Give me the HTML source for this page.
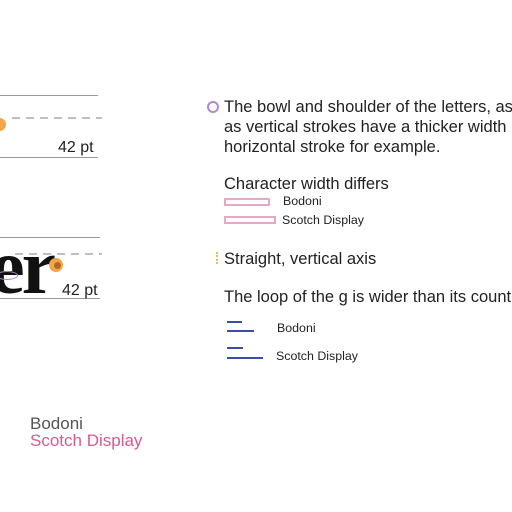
<!DOCTYPE html><html><head><style>
body{margin:0;width:512px;height:512px;overflow:hidden;background:#fff;position:relative;font-family:"Liberation Sans",sans-serif;color:#222}
.a{position:absolute;white-space:nowrap}
.l{position:absolute;height:1px;background:#999}
.d{position:absolute;height:0;border-top:1px dashed #999}
.t{font-size:16.5px;line-height:20px}
.s{font-size:12.4px}
.b{position:absolute;height:2px;background:#3a4fa0}
.r{position:absolute;border:2px solid #e7a8c8;height:4px}
</style></head><body>
<div class="l" style="left:0;top:95px;width:98px"></div>
<svg class="a" style="left:0;top:117px" width="102" height="3"><line x1="12" y1="1" x2="102" y2="1" stroke="#999" stroke-width="1.2" stroke-dasharray="8,6"/></svg>
<div class="l" style="left:0;top:157px;width:98px"></div>
<div class="a" style="left:58px;top:139px;font-size:16px">42 pt</div>
<div class="a" style="left:-7px;top:118px;width:13px;height:13px;border-radius:50%;background:#f5a54a"></div>
<div class="l" style="left:0;top:237px;width:100px"></div>
<svg class="a" style="left:0;top:253px" width="102" height="3"><line x1="15" y1="1" x2="102" y2="1" stroke="#999" stroke-width="1.2" stroke-dasharray="8,6"/></svg>
<div class="l" style="left:0;top:298px;width:100px"></div>
<div class="a" style="left:-10px;top:228px;font-family:'Liberation Serif',serif;font-weight:bold;font-size:78px;line-height:78px;color:#111;letter-spacing:-3px">er</div>
<div class="a" style="left:-4px;top:271px;width:20px;height:7px;border:1px solid #a58ad0;border-radius:50%"></div>
<div class="a" style="left:49px;top:258px;width:14px;height:14px;border-radius:50%;background:#f5a54a"></div>
<div class="a" style="left:54px;top:262px;width:7px;height:7px;border-radius:50%;background:#b06a20"></div>
<div class="a" style="left:62px;top:282px;font-size:16px">42 pt</div>
<div class="a" style="left:30px;top:414px;font-size:17px;color:#555">Bodoni</div>
<div class="a" style="left:30px;top:431px;font-size:17px;color:#d85a90">Scotch Display</div>
<div class="a" style="left:207px;top:101px;width:8px;height:8px;border:2px solid #b08ad0;border-radius:50%"></div>
<div class="a t" style="left:224px;top:97px">The bowl and shoulder of the letters, as<br>as vertical strokes have a thicker width<br>horizontal stroke for example.</div>
<div class="a t" style="left:224px;top:174px">Character width differs</div>
<div class="r" style="left:224px;top:198px;width:42px"></div>
<div class="a s" style="left:283px;top:194px">Bodoni</div>
<div class="r" style="left:224px;top:216px;width:48px"></div>
<div class="a s" style="left:282px;top:213px">Scotch Display</div>
<div class="a" style="left:216px;top:252px;width:2px;height:12px;border-left:2px dotted #d8c060"></div>
<div class="a t" style="left:224px;top:249px">Straight, vertical axis</div>
<div class="a t" style="left:224px;top:287px">The loop of the g is wider than its count</div>
<div class="b" style="left:227px;top:321px;width:15px"></div>
<div class="b" style="left:227px;top:330px;width:27px"></div>
<div class="a s" style="left:277px;top:321px">Bodoni</div>
<div class="b" style="left:227px;top:347px;width:16px"></div>
<div class="b" style="left:227px;top:357px;width:36px"></div>
<div class="a s" style="left:276px;top:349px">Scotch Display</div>
</body></html>
